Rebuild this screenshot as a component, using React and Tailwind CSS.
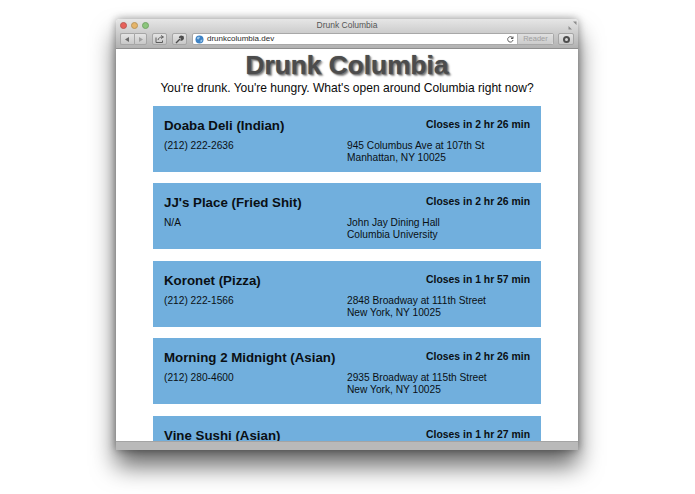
const places = [
  { name: "Doaba Deli (Indian)", closes: "Closes in 2 hr 26 min", phone: "(212) 222-2636", addr: ["945 Columbus Ave at 107th St", "Manhattan, NY 10025"] },
  { name: "JJ's Place (Fried Shit)", closes: "Closes in 2 hr 26 min", phone: "N/A", addr: ["John Jay Dining Hall", "Columbia University"] },
  { name: "Koronet (Pizza)", closes: "Closes in 1 hr 57 min", phone: "(212) 222-1566", addr: ["2848 Broadway at 111th Street", "New York, NY 10025"] },
  { name: "Morning 2 Midnight (Asian)", closes: "Closes in 2 hr 26 min", phone: "(212) 280-4600", addr: ["2935 Broadway at 115th Street", "New York, NY 10025"] },
  { name: "Vine Sushi (Asian)", closes: "Closes in 1 hr 27 min", phone: "", addr: [] },
];

function ToolButton({ className = "", children }) {
  return (
    <div className={`h-[12px] flex items-center justify-center rounded-[2px] border border-[#a6a6a6] bg-gradient-to-b from-[#e4e4e4] to-[#c8c8c8] ${className}`}>
      {children}
    </div>
  );
}

function Toolbar() {
  return (
    <div className="h-[30px] rounded-t-[4px] bg-gradient-to-b from-[#e6e6e6] to-[#b2b2b2] border-b border-[#8f8f8f]">
      {/* title row */}
      <div className="relative h-[14px] pb-[1px] flex items-center justify-center text-[8.5px] text-[#555555]">
        <div className="absolute left-[4px] top-[3px] flex gap-[4px]">
          <span className="w-[7px] h-[7px] rounded-full bg-[#e8605a] border border-[#b85a56]" />
          <span className="w-[7px] h-[7px] rounded-full bg-[#e6b56a] border border-[#b8965c]" />
          <span className="w-[7px] h-[7px] rounded-full bg-[#8cc67c] border border-[#74a468]" />
        </div>
        Drunk Columbia
        <svg className="absolute right-[1px] top-[2px]" width="9" height="9" viewBox="0 0 9 9" fill="#8c8c8c">
          <path d="M5 0.5h3.500v3.500zM0.500 5l3.500 3.500h-3.500z" />
        </svg>
      </div>
      {/* url row */}
      <div className="flex items-center px-[4px] h-[12px]">
        <ToolButton className="w-[13.500px] rounded-r-none border-r-0">
          <svg width="5" height="5" viewBox="0 0 5 5" fill="#6a6a6a"><path d="M4 0v5L0 2.500z" /></svg>
        </ToolButton>
        <ToolButton className="w-[13.500px] rounded-l-none">
          <svg width="5" height="5" viewBox="0 0 5 5" fill="#a0a0a0"><path d="M1 0v5l4-2.500z" /></svg>
        </ToolButton>
        <ToolButton className="w-[15px] ml-[5px]">
          <svg width="10" height="8" viewBox="0 0 10 8" fill="none" stroke="#5c5c5c"><path d="M1 2.500v5h6.500v-2M3 5c.5-2 2-3 4-3M6 0.500l2.500 1.500L6 3.500" /></svg>
        </ToolButton>
        <ToolButton className="w-[15px] ml-[5px]">
          <svg width="9" height="9" viewBox="0 0 9 9" fill="none" stroke="#4c4c4c" strokeWidth="1.400"><path d="M1 8l4-4M4.500 3a2 2 0 0 1 3-1.500L6 3l.5.500L8 2a2 2 0 0 1-2.500 2.800" /></svg>
        </ToolButton>
        <div className="ml-[5px] w-[362px] h-[12px] flex items-center rounded-[2px] border border-[#a8a8a8] bg-white">
          <svg className="ml-[2px]" width="9" height="9" viewBox="0 0 9 9">
            <circle cx="4.500" cy="4.500" r="4" fill="#3d82c4" />
            <path d="M2 2.500l2-1 1 1-1.500 2-1.500-.5zM5.500 5l2-.5-.5 2-1.500 1z" fill="#9cc6e8" />
          </svg>
          <span className="ml-[3px] text-[8px] leading-none text-[#2a2a2a]">drunkcolumbia.dev</span>
          <svg className="ml-auto mr-[3px]" width="7" height="7" viewBox="0 0 7 7" fill="none" stroke="#5a5a5a"><path d="M5.800 2.200A2.700 2.700 0 1 0 6 4M6 0.500v2H4" /></svg>
          <div className="w-[36px] h-full flex items-center justify-center bg-gradient-to-b from-[#e0e0e0] to-[#cccccc] border-l border-[#b4b4b4] text-[7.5px] text-[#a0a0a0] rounded-r-[2px]">
            Reader
          </div>
        </div>
        <ToolButton className="w-[16px] ml-[4px]">
          <span className="w-[7px] h-[7px] rounded-full bg-[#4e4e4e] flex items-center justify-center">
            <span className="w-[3px] h-[3px] rounded-full bg-[#d8d8d8]" />
          </span>
        </ToolButton>
      </div>
    </div>
  );
}

function Place({ place }) {
  return (
    <div className="h-[66px] shrink-0 bg-[#71afdd] px-[11px] pt-[11px] text-[#0a0f14]">
      <div className="flex items-start justify-between">
        <h2 className="text-[13.300px] leading-[17px] font-bold">{place.name}</h2>
        <div className="text-[10.400px] leading-[15px] font-bold">{place.closes}</div>
      </div>
      <div className="flex mt-[6px] text-[10.200px] leading-[12px]">
        <div className="w-[183px]">{place.phone}</div>
        <div>
          {place.addr.map((line) => (
            <div key={line}>{line}</div>
          ))}
        </div>
      </div>
    </div>
  );
}

export default function App() {
  return (
    <div className="w-[695px] h-[494px] overflow-hidden bg-white pt-[19px] pl-[116px] font-['Liberation_Sans',Arial,sans-serif]">
      <div className="w-[462px] h-[431px] flex flex-col rounded-t-[4px] bg-white shadow-[0_16px_24px_0px_rgba(0,0,0,0.6),0_0_8px_rgba(0,0,0,0.4)]">
        <Toolbar />
        <div className="h-[392px] overflow-hidden bg-white flex flex-col items-center">
          <h1 className="mt-[1px] text-[26.300px] leading-[31px] font-bold text-[#4c4c4c] [text-shadow:0_0_1px_#777,1px_1px_1px_#777,2px_2px_2px_#999]">
            Drunk Columbia
          </h1>
          <p className="text-[12.050px] leading-[15px] text-[#0a0a0a]">
            You're drunk. You're hungry. What's open around Columbia right now?
          </p>
          <div className="w-[388px] mt-[9.800px] flex flex-col gap-[11.500px]">
            {places.map((p) => (
              <Place key={p.name} place={p} />
            ))}
          </div>
        </div>
        <div className="h-[9px] bg-[#b9b9b9] border-t border-[#a4a4a4]" />
      </div>
    </div>
  );
}
